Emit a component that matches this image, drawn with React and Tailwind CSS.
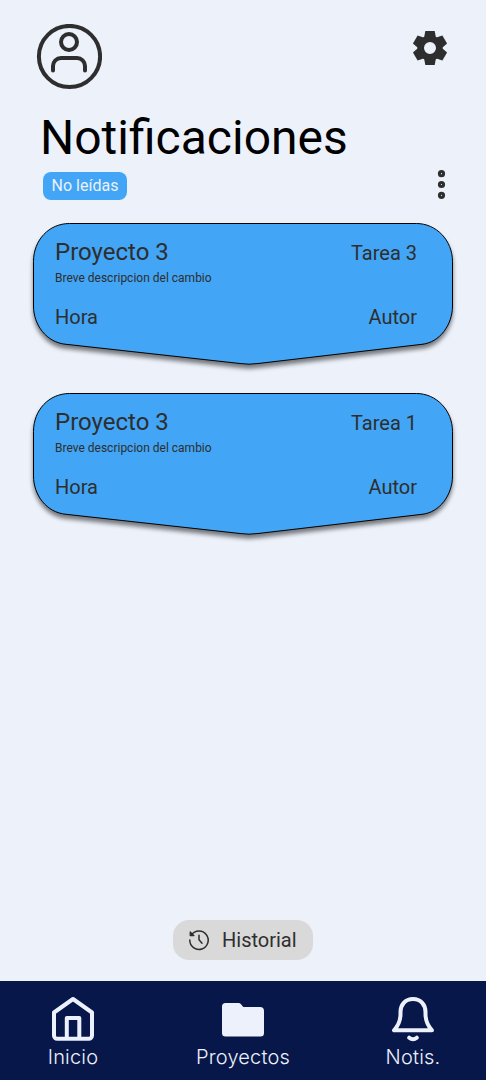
import React from "react";

function UserIcon() {
  return (
    <svg className="h-[66px] w-[66px]" viewBox="0 0 66 66" fill="none" stroke="#2e2e2e" strokeWidth="4" strokeLinecap="round">
      <circle cx="33.5" cy="32.5" r="30.6" />
      <circle cx="33" cy="18" r="8" />
      <path d="M17 46.5V42A8 8 0 0 1 25 34H41A8 8 0 0 1 49 42V46.5" />
    </svg>
  );
}

function GearIcon() {
  const tooth = "M-4.7 -17H4.7L6 -10H-6Z";
  return (
    <svg className="h-[36px] w-[36px]" viewBox="-18 -18 36 36" fill="#2e2e2e">
      <circle r="9.3" fill="none" stroke="#2e2e2e" strokeWidth="6.6" />
      {[0, 60, 120, 180, 240, 300].map((a) => (
        <path key={a} d={tooth} transform={`rotate(${a})`} />
      ))}
    </svg>
  );
}

function MoreIcon() {
  return (
    <svg className="h-[32px] w-[10px]" viewBox="0 0 10 32" fill="none" stroke="#2e2e2e" strokeWidth="3">
      <circle cx="5.5" cy="5.7" r="2.1" />
      <circle cx="5.5" cy="16.5" r="2.1" />
      <circle cx="5.5" cy="27.3" r="2.1" />
    </svg>
  );
}

function HistoryIcon() {
  return (
    <svg className="h-[24px] w-[24px]" viewBox="0 0 24 24" fill="none" stroke="#2e2e2e" strokeWidth="1.5" strokeLinecap="round" strokeLinejoin="round">
      <path d="M4.4 7A9.2 9.2 0 1 1 2.8 12" />
      <path d="M3.2 4V7.6H7Z" fill="#2e2e2e" strokeWidth="1.2" />
      <path d="M12 7.3V11.7L15 15.2" />
    </svg>
  );
}

function HomeIcon() {
  return (
    <svg className="h-[48px] w-[48px]" viewBox="0 0 48 48" fill="none" stroke="#ecf1fb" strokeWidth="4" strokeLinejoin="round">
      <path d="M5 17.5V40.5A3.2 3.2 0 0 0 8.2 43.7H39.8A3.2 3.2 0 0 0 43 40.5V17.5L24 4Z" />
      <path d="M17.8 43V23H30.3V43" />
    </svg>
  );
}

function FolderIcon() {
  return (
    <svg className="h-[48px] w-[48px]" viewBox="0 0 48 48" fill="#ecf1fb">
      <path d="M6.5 8H19.5Q21 8 22 9.2L24.3 12H41Q45 12 45 16V38Q45 41.5 41.5 41.5H6.5Q3 41.5 3 38V11.5Q3 8 6.5 8Z" />
    </svg>
  );
}

function BellIcon() {
  return (
    <svg className="h-[48px] w-[48px]" viewBox="0 0 48 48" fill="none" stroke="#ecf1fb" strokeWidth="4" strokeLinecap="round" strokeLinejoin="round">
      <path d="M24 4C16 4 11.5 10 11.5 17V19C11.5 26 9 31 5 35.3H43C39 31 36.5 26 36.5 19V17C36.5 10 32 4 24 4Z" />
      <path d="M20.2 42.7Q24 45.9 27.8 42.7" />
    </svg>
  );
}

function Notification({ project, task }) {
  return (
    <article className="grid h-[142px] w-[420px] text-[#2e2e2e]">
      <svg className="col-start-1 row-start-1 h-[142px] w-[420px] overflow-visible drop-shadow-[0_4px_2px_rgba(0,0,0,0.5)]" viewBox="0 0 420 142">
        <path
          d="M36.5 .5H383.5C403 .5 419.5 17 419.5 38.5V83C419.5 102 406.5 119.5 389 121.3L225 140.5Q216 141.9 207 140.5L33 121.3C13.5 119.5 .5 102 .5 83V38.5C.5 17 16 .5 36.5 .5Z"
          fill="#42a5f5"
          stroke="#000"
        />
      </svg>
      <div className="z-10 col-start-1 row-start-1 flex flex-col pt-[15px] pr-9 pl-[22px]">
        <div className="flex items-start justify-between">
          <h2 className="text-[24px] leading-7">{project}</h2>
          <span className="mt-[3px] text-[20px] leading-6">{task}</span>
        </div>
        <p className="mt-[5px] text-[12px] leading-[14px]">Breve descripcion del cambio</p>
        <div className="mt-5 flex justify-between text-[20px] leading-6">
          <span>Hora</span>
          <span>Autor</span>
        </div>
      </div>
    </article>
  );
}

export default function App() {
  return (
    <div className="flex h-[1080px] w-[486px] flex-col overflow-hidden bg-[#ecf1fa] font-['Roboto',sans-serif]">
      <header className="flex items-start justify-between pt-6 pr-[38px] pl-9">
        <UserIcon />
        <div className="pt-[6px]">
          <GearIcon />
        </div>
      </header>
      <h1 className="mt-5 pl-10 text-[48px] leading-[56px] text-black">Notificaciones</h1>
      <div className="mt-[2px] flex h-8 items-center justify-between pr-10 pl-[43px]">
        <span className="mt-1 flex h-7 w-[84px] items-center justify-center rounded-lg bg-[#42a5f5] pb-px text-[16px] leading-5 text-[#ecf1fb]">No leídas</span>
        <MoreIcon />
      </div>
      <main className="mt-[23px] flex flex-1 flex-col items-center">
        <div className="flex flex-col gap-7">
          <Notification project="Proyecto 3" task="Tarea 3" />
          <Notification project="Proyecto 3" task="Tarea 1" />
        </div>
        <button className="mt-auto mb-[21px] flex h-10 w-[140px] items-center rounded-2xl bg-[#d9d9d9] pl-[14px] text-[20px] leading-6 text-[#2e2e2e]">
          <HistoryIcon />
          <span className="ml-[11px]">Historial</span>
        </button>
      </main>
      <nav className="flex h-[99px] shrink-0 justify-between bg-[#08174a] px-[25px] pt-[14px] font-['Inter',sans-serif] text-[20px] leading-6 font-light tracking-[0.2px] text-[#ecf1fb]">
        <a className="flex w-24 flex-col items-center"><HomeIcon /><span className="mt-[2px]">Inicio</span></a>
        <a className="flex w-24 flex-col items-center"><FolderIcon /><span className="mt-[2px]">Proyectos</span></a>
        <a className="flex w-24 flex-col items-center"><BellIcon /><span className="mt-[2px]">Notis.</span></a>
      </nav>
    </div>
  );
}
